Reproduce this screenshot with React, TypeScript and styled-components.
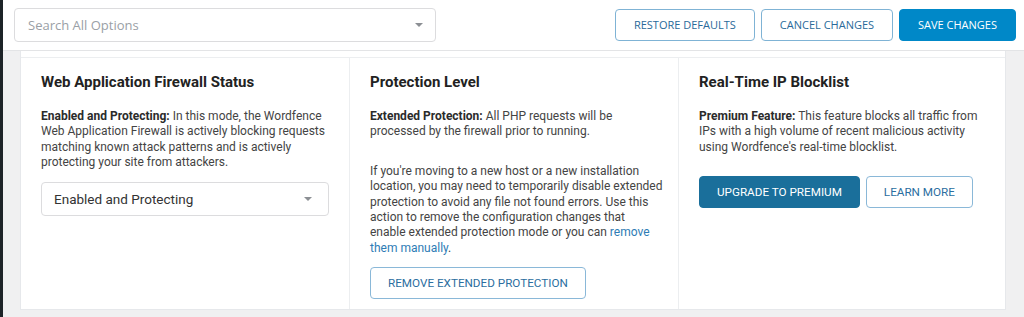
import React from 'react';
import styled, { createGlobalStyle } from 'styled-components';

const GlobalStyle = createGlobalStyle`
  html, body {
    margin: 0;
    padding: 0;
    background: #f0f0f1;
  }
  * {
    box-sizing: border-box;
  }
`;

const Shell = styled.div`
  display: flex;
  width: 1024px;
  height: 317px;
  overflow: hidden;
`;

const AdminEdge = styled.div`
  width: 3px;
  flex-shrink: 0;
  background: #1d2327;
`;

const Main = styled.div`
  flex: 1;
  display: flex;
  flex-direction: column;
`;

const Toolbar = styled.div`
  display: flex;
  align-items: center;
  justify-content: space-between;
  height: 51px;
  padding: 0 8px 1px 11px;
  background: #fff;
  border-bottom: 1px solid #e3e4e6;
  font-family: 'Open Sans', sans-serif;
`;

const SearchBox = styled.div`
  display: flex;
  align-items: center;
  justify-content: space-between;
  width: 422px;
  height: 34px;
  padding: 0 12px 0 13px;
  border: 1px solid #dcdcde;
  border-radius: 4px;
  color: #9aa0a6;
  font-size: 13px;
`;

const Caret = styled.span<{ $size?: number }>`
  width: 0;
  height: 0;
  border-left: ${(p) => p.$size ?? 5}px solid transparent;
  border-right: ${(p) => p.$size ?? 5}px solid transparent;
  border-top: ${(p) => p.$size ?? 5}px solid #8c8f94;
`;

const ButtonRow = styled.div`
  display: flex;
  gap: 6px;
`;

const Button = styled.button<{ $primary?: boolean; $dark?: boolean }>`
  height: 32px;
  padding: 0 18px;
  border-radius: 4px;
  font-family: inherit;
  font-size: 11px;
  white-space: nowrap;
  text-transform: uppercase;
  cursor: pointer;
  border: 1px solid ${(p) => (p.$primary ? '#0088c8' : p.$dark ? '#1a6f9b' : '#7fb3d5')};
  background: ${(p) => (p.$primary ? '#0088c8' : p.$dark ? '#1a6f9b' : '#fff')};
  color: ${(p) => (p.$primary || p.$dark ? '#fff' : '#2a6a9a')};
`;

const Page = styled.div`
  flex: 1;
  padding: 0 18px 7px 17px;
`;

const Card = styled.div`
  height: 100%;
  padding-top: 6px;
  background: #fff;
  border: 1px solid #e6e8eb;
  border-top: none;
`;

const Columns = styled.div`
  display: grid;
  grid-template-columns: 329px 329px 1fr;
  height: 100%;
  border-top: 1px solid #eceef0;
  font-family: Roboto, 'Liberation Sans', sans-serif;
  color: #3c3c3c;
`;

const Column = styled.div<{ $last?: boolean; $padRight?: number }>`
  display: flex;
  flex-direction: column;
  align-items: flex-start;
  padding: 14px ${(p) => p.$padRight ?? 20}px 0 20px;
  border-right: ${(p) => (p.$last ? 'none' : '1px solid #eceef0')};
`;

const Heading = styled.h3`
  margin: 0 0 17px;
  font-size: 15px;
  line-height: 20px;
  font-weight: 700;
  color: #222;
`;

const Text = styled.p<{ $gap?: number }>`
  margin: 0 0 ${(p) => p.$gap ?? 0}px;
  font-size: 12px;
  line-height: 15.4px;
  color: #444;

  b {
    color: #2b2b2b;
  }

  a {
    color: #2e7cb5;
    text-decoration: none;
  }
`;

const Select = styled.div`
  display: flex;
  align-items: center;
  justify-content: space-between;
  width: 100%;
  height: 34px;
  margin-top: 11px;
  padding: 0 16px 0 12px;
  border: 1px solid #dcdcde;
  border-radius: 4px;
  font-size: 13.5px;
  color: #333;
`;

const PanelButton = styled(Button)`
  font-family: Roboto, 'Liberation Sans', sans-serif;
  font-size: 11.7px;
  padding: 0 17px;
  border-color: ${(p) => (p.$dark ? '#1a6f9b' : '#8ab8d8')};
  color: ${(p) => (p.$dark ? '#fff' : '#2b6ea0')};
`;

const PanelActions = styled.div<{ $top: number }>`
  display: flex;
  gap: 6px;
  margin-top: ${(p) => p.$top}px;
`;

export default function App() {
  return (
    <Shell>
      <GlobalStyle />
      <AdminEdge />
      <Main>
        <Toolbar>
          <SearchBox>
            Search All Options
            <Caret $size={4} />
          </SearchBox>
          <ButtonRow>
            <Button>Restore Defaults</Button>
            <Button>Cancel Changes</Button>
            <Button $primary>Save Changes</Button>
          </ButtonRow>
        </Toolbar>
        <Page>
          <Card>
            <Columns>
              <Column>
                <Heading>Web Application Firewall Status</Heading>
                <Text>
                  <b>Enabled and Protecting:</b> In this mode, the Wordfence Web Application Firewall is
                  actively blocking requests matching known attack patterns and is actively protecting
                  your site from attackers.
                </Text>
                <Select>
                  Enabled and Protecting
                  <Caret $size={4} />
                </Select>
              </Column>
              <Column $padRight={4}>
                <Heading>Protection Level</Heading>
                <Text $gap={24}>
                  <b>Extended Protection:</b> All PHP requests will be
                  <br />
                  processed by the firewall prior to running.
                </Text>
                <Text>
                  If you're moving to a new host or a new installation location, you may need to
                  temporarily disable extended protection to avoid any file not found errors. Use this
                  action to remove the configuration changes that
                  <br />
                  enable extended protection mode or you can <a href="#">remove them manually</a>.
                </Text>
                <PanelActions $top={11}>
                  <PanelButton>Remove Extended Protection</PanelButton>
                </PanelActions>
              </Column>
              <Column $last>
                <Heading>Real-Time IP Blocklist</Heading>
                <Text>
                  <b>Premium Feature:</b> This feature blocks all traffic from IPs with a high volume of
                  recent malicious activity using Wordfence's real-time blocklist.
                </Text>
                <PanelActions $top={21}>
                  <PanelButton $dark>Upgrade to Premium</PanelButton>
                  <PanelButton>Learn More</PanelButton>
                </PanelActions>
              </Column>
            </Columns>
          </Card>
        </Page>
      </Main>
    </Shell>
  );
}
